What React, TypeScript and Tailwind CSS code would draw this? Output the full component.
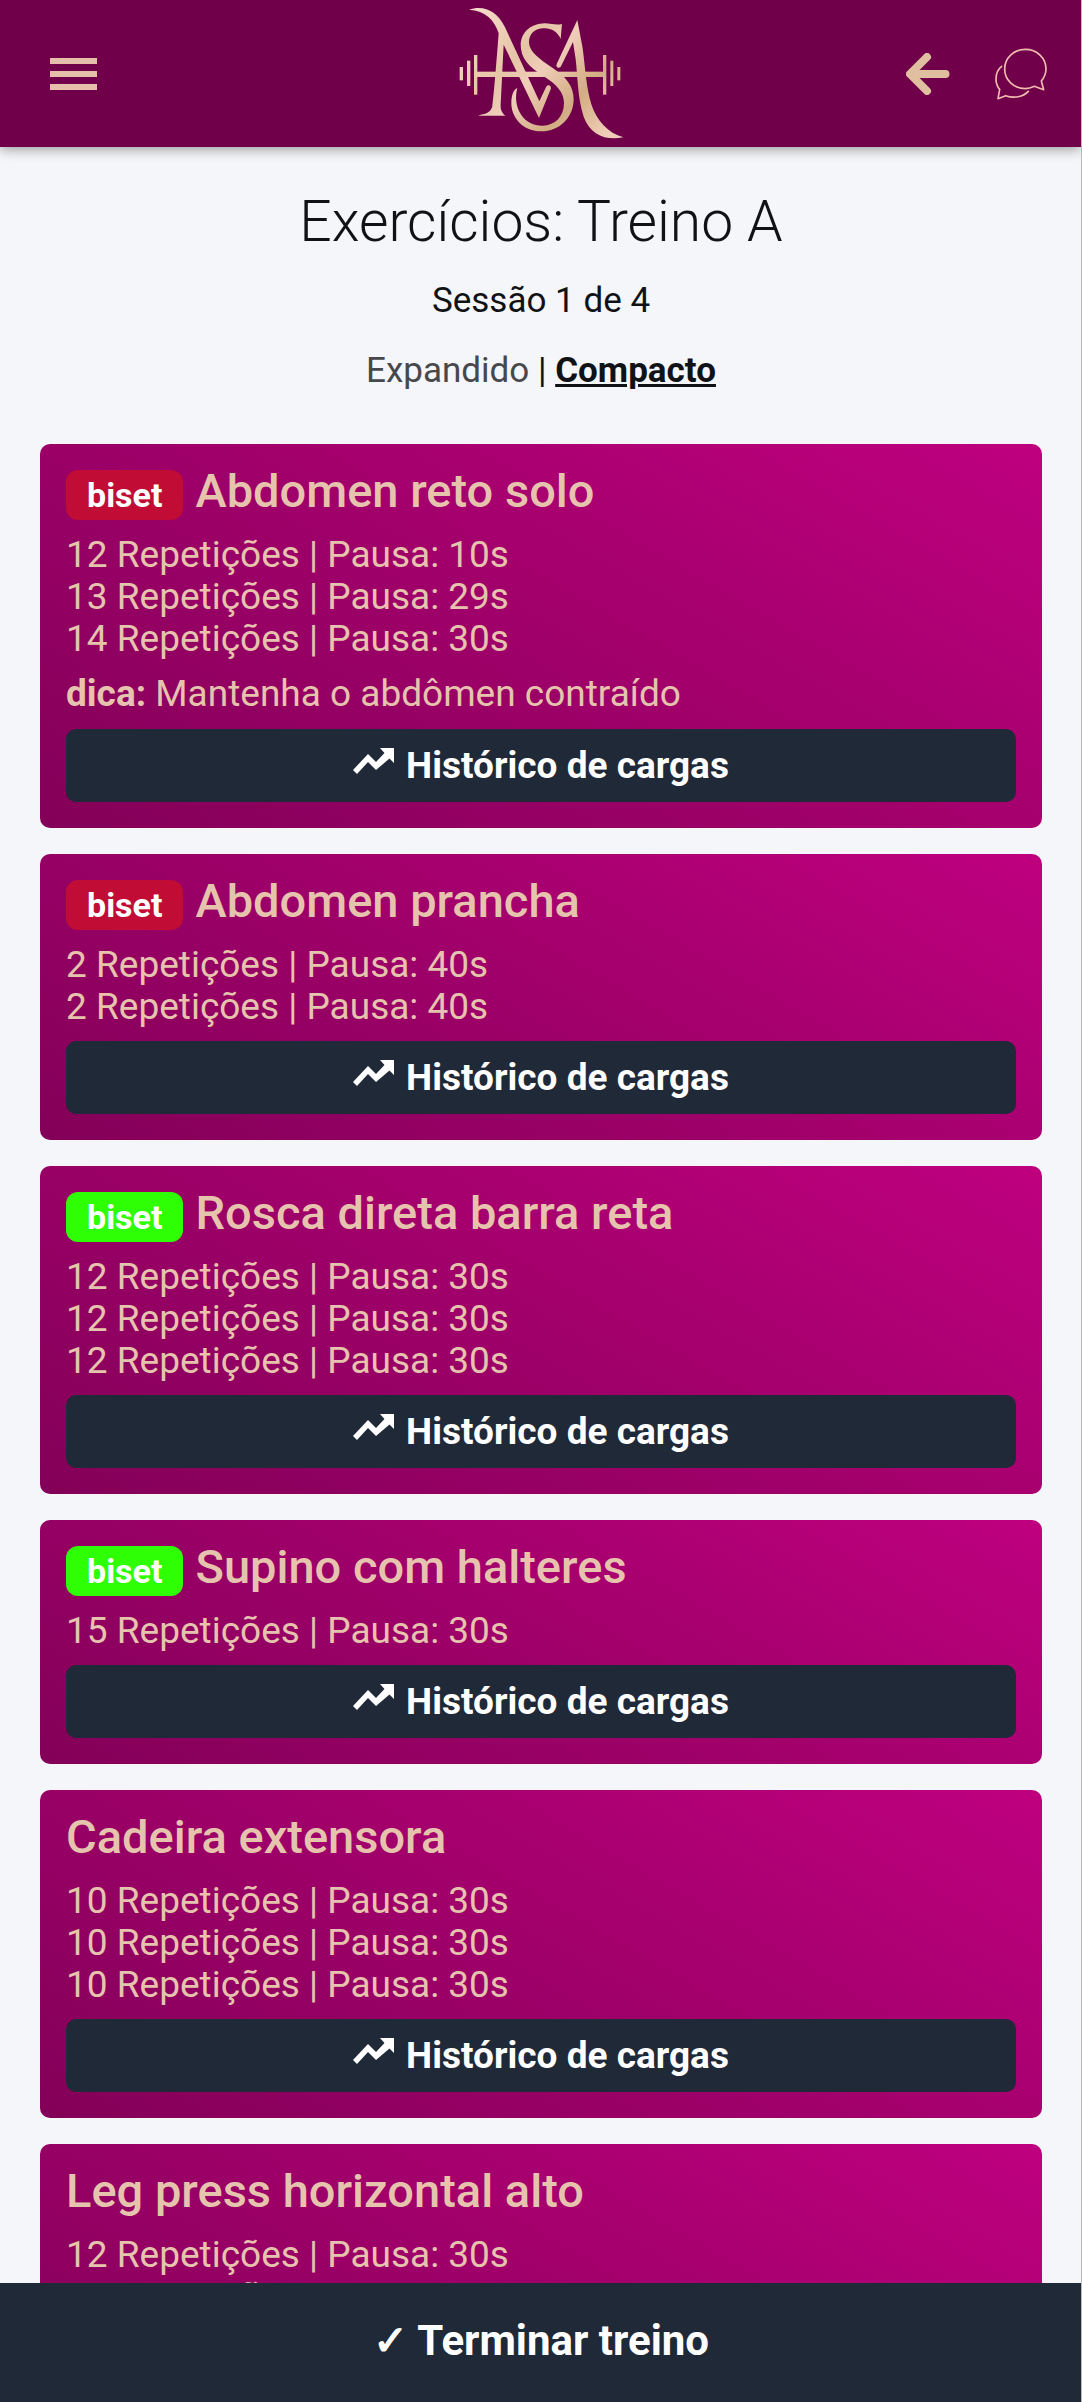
type Exercise = {
  name: string;
  badge?: "red" | "green";
  sets: string[];
  tip?: string;
};

const exercises: Exercise[] = [
  {
    name: "Abdomen reto solo",
    badge: "red",
    sets: ["12 Repetições | Pausa: 10s", "13 Repetições | Pausa: 29s", "14 Repetições | Pausa: 30s"],
    tip: "Mantenha o abdômen contraído",
  },
  {
    name: "Abdomen prancha",
    badge: "red",
    sets: ["2 Repetições | Pausa: 40s", "2 Repetições | Pausa: 40s"],
  },
  {
    name: "Rosca direta barra reta",
    badge: "green",
    sets: ["12 Repetições | Pausa: 30s", "12 Repetições | Pausa: 30s", "12 Repetições | Pausa: 30s"],
  },
  { name: "Supino com halteres", badge: "green", sets: ["15 Repetições | Pausa: 30s"] },
  {
    name: "Cadeira extensora",
    sets: ["10 Repetições | Pausa: 30s", "10 Repetições | Pausa: 30s", "10 Repetições | Pausa: 30s"],
  },
  {
    name: "Leg press horizontal alto",
    sets: ["12 Repetições | Pausa: 30s", "12 Repetições | Pausa: 30s"],
  },
];

const badgeColor = { red: "bg-[#c10d35]", green: "bg-[#2fff05]" };

function Logo() {
  return (
    <svg viewBox="46 15 510 411" className="h-[137px] w-[170px]" fill="url(#gold)" role="img" aria-label="ASA">
      <defs>
        <linearGradient id="gold" gradientUnits="userSpaceOnUse" x1="100" y1="30" x2="500" y2="400">
          <stop offset="0" stopColor="#f6dccb" />
          <stop offset="0.35" stopColor="#e6c4a6" />
          <stop offset="0.5" stopColor="#efcdb9" />
          <stop offset="0.75" stopColor="#d2ac81" />
          <stop offset="1" stopColor="#f0cdb8" />
        </linearGradient>
      </defs>
      <rect x="60" y="201" width="10" height="40" />
      <rect x="82" y="182" width="10" height="76" />
      <rect x="103" y="165" width="10" height="119" />
      <rect x="490" y="165" width="10" height="119" />
      <rect x="512" y="182" width="9" height="76" />
      <rect x="533" y="201" width="9" height="40" />
      <rect x="112" y="215" width="380" height="16" />
      <path d="M88 29C132 15 172 32 196 82L299 304L319 262C324 251 337 256 333 268L298 354L192 134L183 312C182 330 187 338 197 347L117 347C120 342 152 346 158 318C163 280 170 190 177 100C164 60 138 32 88 29Z" />
      <path d="M367 72L363 117C354 96 335 84 312 85C286 86 268 101 268 127C268 155 300 178 338 203C380 230 402 260 402 297C402 352 360 394 305 394C250 394 213 352 215 305C216 285 222 268 233 264C226 290 228 320 245 345C260 367 285 378 310 377C346 375 372 350 373 311C374 277 350 252 310 227C265 199 243 172 243 134C245 95 275 71 315 70C335 70 350 77 367 72Z" />
      <path d="M413 60L429 145C437 205 440 265 455 313C471 362 505 400 551 412C500 423 452 405 432 350C414 298 414 230 408 178L400 126L364 199C358 208 347 202 351 192Z" />
    </svg>
  );
}

function MenuIcon() {
  return (
    <svg viewBox="0 0 48 32" className="h-8 w-12" fill="#e5bfa9" aria-hidden="true">
      <path d="M0 0h47v6H0zM0 13h47v6H0zM0 26h47v6H0z" />
    </svg>
  );
}

function BackIcon() {
  return (
    <svg viewBox="0 0 44 42" className="h-[42px] w-11" fill="none" stroke="#dfbf9f" strokeWidth="8" strokeLinecap="round" strokeLinejoin="round" aria-hidden="true">
      <path d="M21 4L4 21L21 38M5 21H39.500" />
    </svg>
  );
}

function ChatIcon() {
  return (
    <svg viewBox="405 140 162 162" className="size-[54px]" fill="none" stroke="#f0bcae" strokeWidth="5" strokeLinecap="round" strokeLinejoin="round" aria-hidden="true">
      <path d="M499 147C464 147 437 173 437 206C437 239 464 265 499 265C509 265 518 262 526 258L554 268L547 242C556 231 561 219 561 206C561 173 534 147 499 147Z" />
      <path d="M428 198C416 207 411 221 411 236C411 249 415 259 422 267L417 295L440 286C465 295 492 290 508 273" />
    </svg>
  );
}

function TrendingIcon() {
  return (
    <svg viewBox="0 0 41 28" className="mr-3 mb-2 h-7 w-[41px]" fill="#fff" aria-hidden="true">
      <path d="M27 0H41V15L36.500 10.500L23 22L15 14L4 26L0 22L15 6L23 14L31.500 5Z" />
    </svg>
  );
}

function ExerciseCard({ name, badge, sets, tip }: Exercise) {
  return (
    <article className="rounded-[10px] bg-[linear-gradient(30deg,#830058,#a0006a_50%,#bf007f)] p-[26px] text-[37px] leading-[42px] text-[#e5c3ad]">
      <div className="flex h-16 items-start">
        {badge && (
          <span className={`mr-3 flex h-[50px] items-center rounded-xl px-[21px] text-[34px] font-bold text-white ${badgeColor[badge]}`}>
            biset
          </span>
        )}
        <h2 className="text-[47px] leading-[42px] font-medium">{name}</h2>
      </div>
      <ul>
        {sets.map((set, i) => (
          <li key={i}>{set}</li>
        ))}
      </ul>
      {tip && (
        <p className="mt-[13px] mb-3.5">
          <strong>dica:</strong> {tip}
        </p>
      )}
      <button type="button" className="mt-[13px] flex h-[73px] w-full items-center justify-center rounded-[10px] bg-[#202937] font-bold text-white">
        <TrendingIcon />
        Histórico de cargas
      </button>
    </article>
  );
}

export default function App() {
  return (
    <div className="flex h-screen flex-col overflow-hidden border-r border-[#b9b9bd] bg-[#f4f6fa] font-['Roboto',sans-serif] text-[#111216]">
      <header className="relative grid h-[147px] shrink-0 grid-cols-3 items-center bg-[#6f0049] px-[33px] shadow-[0_2px_12px_rgba(0,0,0,0.4)]">
        <button type="button" aria-label="Menu" className="ml-[17px] justify-self-start">
          <MenuIcon />
        </button>
        <div className="justify-self-center">
          <Logo />
        </div>
        <div className="flex items-center gap-11 justify-self-end">
          <button type="button" aria-label="Voltar">
            <BackIcon />
          </button>
          <button type="button" aria-label="Mensagens">
            <ChatIcon />
          </button>
        </div>
      </header>

      <main className="min-h-0 flex-1 overflow-hidden pr-[39px] pl-10">
        <div className="flex h-[297px] flex-col items-center pt-[41px]">
          <h1 className="text-[57px] leading-[68px] font-light">Exercícios: Treino A</h1>
          <p className="mt-6 text-[35px] leading-[42px]">Sessão 1 de 4</p>
          <nav className="mt-7 text-[35px] leading-[42px]">
            <a href="#expandido" className="text-[#47484c]">Expandido</a> |{" "}
            <a href="#compacto" className="font-bold underline">Compacto</a>
          </nav>
        </div>
        <div className="flex flex-col gap-[26px]">
          {exercises.map((exercise) => (
            <ExerciseCard key={exercise.name} {...exercise} />
          ))}
        </div>
      </main>

      <button type="button" className="-mr-px flex h-[119px] shrink-0 items-center justify-center bg-[#202937] pb-1 text-[42px] font-bold text-white">
        ✓ Terminar treino
      </button>
    </div>
  );
}
